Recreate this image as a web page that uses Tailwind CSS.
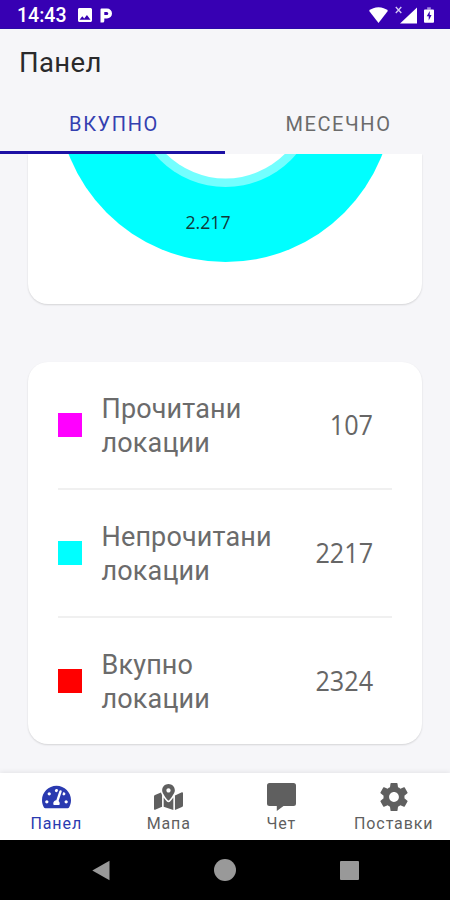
<!DOCTYPE html>
<html lang="mk">
<head>
  <meta charset="UTF-8" />
  <meta name="viewport" content="width=device-width, initial-scale=1.0" />
  <title>Панел</title>
  <script src="https://cdn.jsdelivr.net/npm/@tailwindcss/browser@4"></script>
</head>
<body class="bg-[#f6f6f9] font-['Roboto',sans-serif]">
  <div class="w-[450px] h-[900px] flex flex-col overflow-hidden">
    <!-- Status bar -->
    <div class="h-[29px] shrink-0 bg-[#3700b3] border-b border-[#2a0aa8] flex items-center text-white pl-[17px] pr-[15px] pt-[2px]">
      <span class="text-[19.500px] leading-none font-medium w-[61px] pt-[2px] whitespace-nowrap">14:43</span>
      <svg class="w-[14px] h-[14px]" viewBox="3 3 18 18" fill="currentColor"><path d="M21 19V5c0-1.100-.9-2-2-2H5c-1.100 0-2 .9-2 2v14c0 1.100.9 2 2 2h14c1.100 0 2-.9 2-2zM8.500 13.500l2.500 3.010L14.500 12l4.500 6H5l3.500-4.500z"/></svg>
      <svg class="w-[12px] h-[15px] ml-[8px]" viewBox="0 0 12 15" fill="currentColor" fill-rule="evenodd"><path d="M.5 1.500Q.5.500 1.500.500H7a5 5 0 0 1 0 10H4.300V13a1.500 1.500 0 0 1-1.500 1.500H.5zM4.300 4v3H6.800a1.500 1.500 0 0 0 0-3z"/></svg>
      <svg class="w-[19px] h-[16px] ml-auto" viewBox="0 0 19 16" fill="currentColor"><path d="M9.500 16L0 3.800C2.500 1.500 5.800.3 9.500.3S16.500 1.500 19 3.800z"/></svg>
      <svg class="w-[23px] h-[18px] ml-[7px]" viewBox="0 0 23 18"><path d="M22 1.500V17.500H5z" fill="currentColor"/><path d="M.8 1l5.500 6M6.300 1L.8 7" stroke="#d7ccf5" stroke-width="1.300"/></svg>
      <svg class="w-[10px] h-[16px] ml-[6px] mr-[1px]" viewBox="0 0 11 17"><path d="M3.500 0h4v2.500h-4z" fill="#a58be0"/><path d="M1 2.500H10a1 1 0 0 1 1 1v12.500a1 1 0 0 1-1 1H1a1 1 0 0 1-1-1V3.500a1 1 0 0 1 1-1z" fill="currentColor"/><path d="M6.300 4L3 10h2.200v4.500L8.300 8.600H6.300z" fill="#3700b3"/></svg>
    </div>

    <!-- Header -->
    <header class="h-[66px] shrink-0 flex items-center pl-[19px] pt-[2px]">
      <h1 class="text-[27.500px] leading-none text-[#2a2a2c] tracking-[0.350px]">Панел</h1>
    </header>

    <!-- Tabs -->
    <div class="h-[59px] shrink-0 flex text-[20px] leading-none tracking-[1.600px]">
      <div class="w-1/2 flex items-center justify-center text-[#3440b0] border-b-[3px] border-[#1c10a4] pt-[2px] pl-[3px]">ВКУПНО</div>
      <div class="w-1/2 flex items-center justify-center text-[#6b6b6b] pb-[1px] pl-[2px]">МЕСЕЧНО</div>
    </div>

    <!-- Content -->
    <main class="flex-1 min-h-0 px-[28px]">
      <div class="h-[150px] bg-white rounded-b-[20px] shadow-[0_1px_2px_rgba(0,0,0,0.14)] [clip-path:inset(0_-4px_-4px_-4px)]">
        <svg class="block w-[394px] h-[150px]" viewBox="28 154 394 150">
          <circle cx="225.500" cy="94" r="168" fill="#00ffff"/>
          <circle cx="225.500" cy="94.500" r="92.500" fill="#73ffff"/>
          <circle cx="225.500" cy="94.500" r="84" fill="#fff"/>
          <text x="185.500" y="229.300" font-size="18.500" textLength="45" lengthAdjust="spacingAndGlyphs" fill="#103a3a" class="font-['Open_Sans',sans-serif]">2.217</text>
        </svg>
      </div>

      <div class="mt-[58px] h-[382px] bg-white rounded-[20px] shadow-[0_1px_2px_rgba(0,0,0,0.14)] px-[30px] text-[#6b6b6b] text-[27px] leading-[34px] tracking-[0.150px]">
        <div class="h-[128px] flex items-center border-b-2 border-[#f0f0f0]">
          <span class="w-6 h-6 bg-[#ff00ff]"></span>
          <p class="ml-[19.500px] w-[190px] pt-[2px]">Прочитани<br>локации</p>
          <span class="ml-auto mr-[19px] pb-[3px] text-[28px] tracking-normal text-[#666] font-['Open_Sans',sans-serif] scale-x-90 origin-right">107</span>
        </div>
        <div class="h-[128px] flex items-center border-b-2 border-[#f0f0f0]">
          <span class="w-6 h-6 bg-[#00ffff]"></span>
          <p class="ml-[19.500px] w-[190px] pt-[2px]">Непрочитани<br>локации</p>
          <span class="ml-auto mr-[19px] pb-[3px] text-[28px] tracking-normal text-[#666] font-['Open_Sans',sans-serif] scale-x-90 origin-right">2217</span>
        </div>
        <div class="h-[126px] flex items-center">
          <span class="w-6 h-6 bg-[#ff0000]"></span>
          <p class="ml-[19.500px] w-[190px] pt-[2px]">Вкупно<br>локации</p>
          <span class="ml-auto mr-[19px] pb-[3px] text-[28px] tracking-normal text-[#666] font-['Open_Sans',sans-serif] scale-x-90 origin-right">2324</span>
        </div>
      </div>
    </main>

    <!-- Bottom navigation -->
    <nav class="h-[67px] shrink-0 grid grid-cols-4 bg-white shadow-[0_-1px_5px_rgba(0,0,0,0.08)] text-[#5f5f5f] text-[16px] leading-none tracking-[0.900px]">
      <a class="flex flex-col items-center text-[#2a3ab0]">
        <svg class="w-[29px] h-[26px] mt-[11px]" viewBox="0 0 576 512" fill="currentColor"><path d="M288 32C128.940 32 0 160.940 0 320c0 52.800 14.250 102.260 39.060 144.800 5.610 9.620 16.300 15.200 27.440 15.200h443c11.140 0 21.830-5.580 27.440-15.200C561.750 422.260 576 372.800 576 320c0-159.060-128.940-288-288-288zm0 64c14.710 0 26.580 10.130 30.320 23.650-1.110 2.260-2.640 4.230-3.450 6.670l-9.220 27.670c-5.130 3.490-10.970 6.010-17.640 6.010-17.670 0-32-14.330-32-32S270.330 96 288 96zM96 384c-17.670 0-32-14.330-32-32s14.330-32 32-32 32 14.330 32 32-14.330 32-32 32zm48-160c-17.670 0-32-14.330-32-32s14.330-32 32-32 32 14.330 32 32-14.330 32-32 32zm246.770-72.410l-61.330 184C343.130 347.330 352 364.540 352 384c0 11.720-3.380 22.550-8.880 32H232.880c-5.500-9.450-8.880-20.280-8.880-32 0-33.940 26.500-61.430 59.900-63.590l61.340-184.010c4.170-12.560 17.730-19.450 30.360-15.170 12.570 4.190 19.350 17.790 15.170 30.360zm14.660 57.200l15.520-46.550c3.470-1.290 7.130-2.230 11.050-2.230 17.670 0 32 14.330 32 32s-14.330 32-32 32c-11.380-.01-20.890-6.280-26.570-15.220zM480 384c-17.670 0-32-14.330-32-32s14.330-32 32-32 32 14.330 32 32-14.330 32-32 32z"/></svg>
        <span class="mt-[6px]">Панел</span>
      </a>
      <a class="flex flex-col items-center">
        <svg class="w-[29px] h-[26px] mt-[11px]" viewBox="0 0 576 512" fill="currentColor"><path d="M288 0c-69.590 0-126 56.410-126 126 0 56.260 82.350 158.800 113.900 196.020 6.390 7.540 17.820 7.540 24.200 0C331.650 284.800 414 182.260 414 126 414 56.410 357.590 0 288 0zm0 168c-23.200 0-42-18.800-42-42s18.800-42 42-42 42 18.800 42 42-18.800 42-42 42zM20.120 215.950A32.006 32.006 0 0 0 0 245.660v250.320c0 11.320 11.430 19.060 21.940 14.860L160 448V214.920c-8.840-15.980-16.070-31.540-21.250-46.420L20.120 215.950zM288 359.670c-14.070 0-27.380-6.180-36.510-16.960-19.660-23.200-40.570-49.620-59.490-76.720v182l192 64V266c-18.920 27.090-39.820 53.520-59.490 76.720-9.130 10.770-22.440 16.950-36.510 16.950zm266.060-198.510L416 224v288l139.880-55.950A31.996 31.996 0 0 0 576 426.340V176.020c0-11.320-11.430-19.060-21.940-14.860z"/></svg>
        <span class="mt-[6px]">Мапа</span>
      </a>
      <a class="flex flex-col items-center">
        <svg class="w-[29px] h-[28px] mt-[10px]" viewBox="0 0 29 28" fill="currentColor"><path d="M2.500 0h24A2.500 2.500 0 0 1 29 2.500v18a2.500 2.500 0 0 1-2.500 2.500H16.500L9.800 28V23H2.500A2.500 2.500 0 0 1 0 20.500v-18A2.500 2.500 0 0 1 2.500 0z"/></svg>
        <span class="mt-[5px]">Чет</span>
      </a>
      <a class="flex flex-col items-center">
        <svg class="w-[28px] h-[28px] mt-[10px]" viewBox="2 2 20 20" fill="currentColor"><path d="M19.430 12.980c.04-.32.07-.64.07-.98s-.03-.66-.07-.98l2.110-1.650c.19-.15.24-.42.12-.64l-2-3.460c-.12-.22-.39-.3-.61-.22l-2.490 1c-.52-.4-1.080-.73-1.690-.98l-.38-2.650C14.460 2.180 14.250 2 14 2h-4c-.25 0-.46.18-.49.42l-.38 2.650c-.61.25-1.170.59-1.690.98l-2.490-1c-.23-.09-.49 0-.61.22l-2 3.460c-.13.22-.07.49.12.64l2.110 1.650c-.04.32-.07.65-.07.98s.03.66.07.98l-2.110 1.650c-.19.15-.24.42-.12.64l2 3.460c.12.22.39.3.61.22l2.490-1c.52.4 1.080.73 1.690.98l.38 2.650c.03.24.24.42.49.42h4c.25 0 .46-.18.49-.42l.38-2.650c.61-.25 1.170-.59 1.690-.98l2.490 1c.23.09.49 0 .61-.22l2-3.460c.12-.22.07-.49-.12-.64l-2.110-1.650zM12 15.500c-1.930 0-3.500-1.570-3.500-3.500s1.570-3.500 3.500-3.500 3.500 1.570 3.500 3.500-1.570 3.500-3.500 3.500z"/></svg>
        <span class="mt-[5px]">Поставки</span>
      </a>
    </nav>

    <!-- System navigation -->
    <div class="h-[60px] shrink-0 bg-black text-[#999] flex items-center pl-[92px] pr-[91px] justify-between">
      <svg class="w-[18px] h-[21px]" viewBox="0 0 18 21" fill="currentColor"><path d="M17.500.8v19.400L.3 10.500z"/></svg>
      <span class="w-[22px] h-[22px] rounded-full bg-[#999]"></span>
      <span class="w-[19px] h-[19px] rounded-[1px] bg-[#999]"></span>
    </div>
  </div>
</body>
</html>
